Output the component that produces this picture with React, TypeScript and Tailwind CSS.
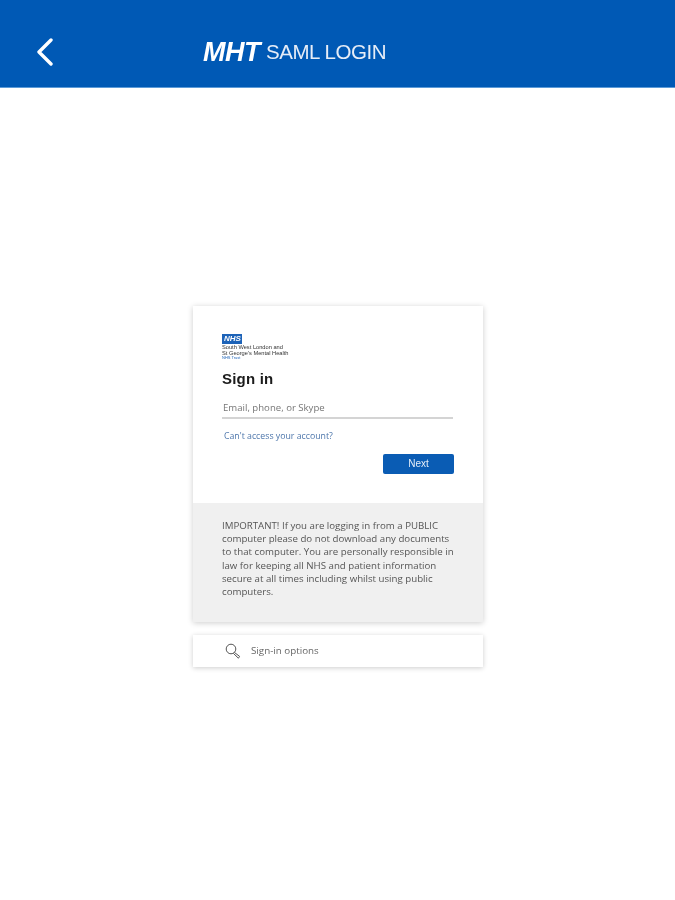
const sans = "font-['Liberation_Sans',Arial,sans-serif]"
const body = "font-['Open_Sans',sans-serif]"

const BackIcon = () => (
  <svg width="18" height="28" viewBox="0 0 18 28" fill="none" className="text-white">
    <path d="M15 2 L3 14 L15 26" stroke="currentColor" strokeWidth="3.4" strokeLinecap="round" strokeLinejoin="round" />
  </svg>
)

const KeyIcon = () => (
  <svg width="16" height="16" viewBox="0 0 16 16" fill="none" className="text-[#555]">
    <circle cx="6" cy="6" r="4.8" stroke="currentColor" strokeWidth="1" />
    <path d="M9.4 9.4 L14.6 13.4 L13.4 15.2 L8.4 10.4" stroke="currentColor" strokeWidth="1" strokeLinejoin="round" />
  </svg>
)

const Header = () => (
  <div className="flex h-[88px] items-center border-b border-[#5c9bd8] bg-[#0059b5] pt-[17px] pl-[36px]">
    <BackIcon />
    <div className="ml-[149px] flex items-center gap-[6px] text-white blur-[0.5px]">
      <span className="text-[27px] leading-none font-bold tracking-[-0.5px] italic">MHT</span>
      <span className="text-[20.5px] leading-none tracking-[-0.45px] text-[#e6edf7]">SAML LOGIN</span>
    </div>
  </div>
)

const Logo = () => (
  <div className="flex flex-col items-start">
    <div className="h-[10px] w-[20px] bg-[#1d63b8] px-[2px] text-[8px] leading-[10px] font-bold text-white italic">NHS</div>
    <div className="text-[5.7px] leading-[6px] whitespace-nowrap text-[#333]">South West London and</div>
    <div className="text-[5.7px] leading-[6px] whitespace-nowrap text-[#333]">St George's Mental Health</div>
    <div className="text-[4px] leading-[4px] whitespace-nowrap text-[#1d63b8]">NHS Trust</div>
  </div>
)

const LoginCard = () => (
  <div className="w-[290px] shadow-[0_1px_6px_rgba(0,0,0,0.2)]">
    <div className="h-[197px] bg-white pt-[28px] pr-[30px] pl-[29px] blur-[0.5px]">
      <Logo />
      <h1 className="mt-[10px] text-[15px] leading-[18px] font-bold tracking-[0.2px] text-[#1b1b1b]">Sign in</h1>
      <div className={`${body} mt-[12px] h-[19px] border-b-2 border-[#d4d4d4] pl-[1px] text-[9.6px] leading-[15px] text-[#777]`}>
        Email, phone, or Skype
      </div>
      <div className={`${body} mt-[11px] pl-[2px] text-[8.75px] leading-[12px] text-[#4d76ab]`}>Can't access your account?</div>
      <div className="mt-[12px] flex justify-end">
        <button className="h-[20px] w-[71px] translate-x-[1px] rounded-[2px] bg-[#0a5cb4] text-[10px] leading-[20px] text-[#e6eef8]">Next</button>
      </div>
    </div>
    <div className={`${body} h-[119px] bg-[#f0f0f0] pt-[16px] pr-[26px] pl-[29px] text-[9.7px] leading-[13.2px] text-[#555]`}>
      <p className="blur-[0.5px]">
        IMPORTANT! If you are logging in from a PUBLIC computer please do not download any documents to that computer.
        You are personally responsible in law for keeping all NHS and patient information secure at all times including
        whilst using public computers.
      </p>
    </div>
  </div>
)

const SignInOptions = () => (
  <div className="mt-[13px] flex h-[32px] w-[290px] items-center bg-white pl-[32px] shadow-[0_1px_5px_rgba(0,0,0,0.2)]">
    <KeyIcon />
    <span className={`${body} ml-[10px] text-[9.8px] text-[#666] blur-[0.5px]`}>Sign-in options</span>
  </div>
)

export default function App() {
  return (
    <div className={`${sans} min-h-[900px] bg-white`}>
      <Header />
      <div className="flex flex-col items-start pt-[218px] pl-[193px]">
        <LoginCard />
        <SignInOptions />
      </div>
    </div>
  )
}
